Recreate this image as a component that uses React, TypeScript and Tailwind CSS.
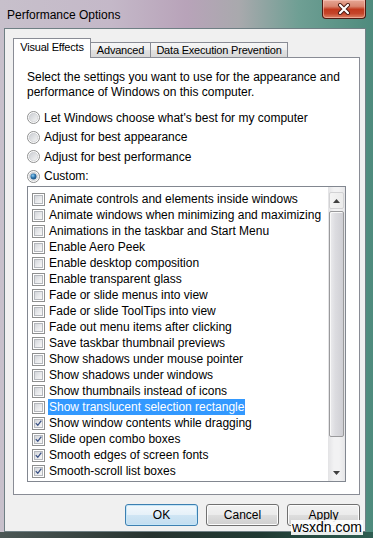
import React from "react";

type Effect = { label: string; checked: boolean; selected?: boolean };

const effects: Effect[] = [
  { label: "Animate controls and elements inside windows", checked: false },
  { label: "Animate windows when minimizing and maximizing", checked: false },
  { label: "Animations in the taskbar and Start Menu", checked: false },
  { label: "Enable Aero Peek", checked: false },
  { label: "Enable desktop composition", checked: false },
  { label: "Enable transparent glass", checked: false },
  { label: "Fade or slide menus into view", checked: false },
  { label: "Fade or slide ToolTips into view", checked: false },
  { label: "Fade out menu items after clicking", checked: false },
  { label: "Save taskbar thumbnail previews", checked: false },
  { label: "Show shadows under mouse pointer", checked: false },
  { label: "Show shadows under windows", checked: false },
  { label: "Show thumbnails instead of icons", checked: false },
  { label: "Show translucent selection rectangle", checked: false, selected: true },
  { label: "Show window contents while dragging", checked: true },
  { label: "Slide open combo boxes", checked: true },
  { label: "Smooth edges of screen fonts", checked: true },
  { label: "Smooth-scroll list boxes", checked: true },
];

const radios = [
  { label: "Let Windows choose what's best for my computer", on: false },
  { label: "Adjust for best appearance", on: false },
  { label: "Adjust for best performance", on: false },
  { label: "Custom:", on: true },
];

const tabIdle =
  "flex h-[15px] items-center justify-center whitespace-nowrap border border-b-0 border-l-0 border-[#898c95] " +
  "bg-[linear-gradient(180deg,#f6f6f6_0%,#eeeeee_50%,#e2e2e2_51%,#d8d8d8_100%)] text-[11px] tracking-[-0.2px]";

function CheckBox({ checked }: { checked: boolean }) {
  return (
    <span className="flex h-[13px] w-[13px] shrink-0 items-center justify-center border border-[#8e8f8f] bg-white p-px">
      <span className="relative h-full w-full border border-[#b5b8bd] bg-[linear-gradient(135deg,#d3d6da_0%,#e9eaec_55%,#f7f7f7_100%)]">
        {checked && (
          <svg viewBox="0 0 9 9" className="absolute inset-0 h-full w-full">
            <path
              d="M1.6 4.6 L3.6 6.8 L7.6 1.6"
              fill="none"
              stroke="#3a5184"
              strokeWidth="1.7"
              strokeLinecap="square"
            />
          </svg>
        )}
      </span>
    </span>
  );
}

function Radio({ on }: { on: boolean }) {
  return (
    <svg viewBox="0 0 13 13" className="h-[13px] w-[13px] shrink-0">
      <defs>
        <linearGradient id="rg" x1="0" y1="0" x2="1" y2="1">
          <stop offset="0" stopColor="#c9ccd1" />
          <stop offset="1" stopColor="#f6f6f6" />
        </linearGradient>
        <radialGradient id="rd" cx="0.4" cy="0.35" r="0.7">
          <stop offset="0" stopColor="#8fd0f6" />
          <stop offset="0.55" stopColor="#2a70a8" />
          <stop offset="1" stopColor="#1c4f7c" />
        </radialGradient>
      </defs>
      <circle cx="6.5" cy="6.5" r="6" fill="#fff" stroke="#8e8f8f" />
      <circle cx="6.5" cy="6.5" r="4.3" fill="url(#rg)" stroke="#c2c4c8" strokeWidth="0.6" />
      {on && <circle cx="6.5" cy="6.5" r="3" fill="url(#rd)" />}
    </svg>
  );
}

function Arrow({ up }: { up: boolean }) {
  return (
    <svg viewBox="0 0 7 4" className="h-[4px] w-[7px]">
      <path d={up ? "M0 4 L3.5 0 L7 4 Z" : "M0 0 L3.5 4 L7 0 Z"} fill="#3f3f3f" />
    </svg>
  );
}

function Button({ label, primary }: { label: string; primary?: boolean }) {
  return (
    <button
      className={
        primary
          ? "h-[22px] w-[73px] rounded-[3px] border border-[#3c7fb1] bg-[linear-gradient(180deg,#f2f8fc_0%,#e6f1f9_48%,#cfe5f4_52%,#c2ddf0_100%)] text-[12px] text-black shadow-[inset_0_0_0_1px_#c5e6f8]"
          : "h-[22px] w-[73px] rounded-[3px] border border-[#707070] bg-[linear-gradient(180deg,#f2f2f2_0%,#ebebeb_48%,#dddddd_52%,#cfcfcf_100%)] text-[12px] text-black shadow-[inset_0_0_0_1px_#fcfcfc]"
      }
    >
      {label}
    </button>
  );
}

export default function App() {
  return (
    <div className="relative flex h-[538px] w-[373px] flex-col overflow-hidden bg-[linear-gradient(90deg,#c7c0cb_0%,#c4b8c8_30%,#b8a3b9_50%,#a9a9ad_64%,#6f9f94_80%,#4e8b7d_100%)] font-['Liberation_Sans',Arial,sans-serif] text-[12px] text-black">
      {/* title bar */}
      <div className="flex h-[28px] shrink-0 items-start">
        <span className="self-center pl-[7px] pt-[2px] text-[12px] text-black">Performance Options</span>
        <div className="ml-auto mr-[7px] flex h-[19px] w-[44px] items-center justify-center rounded-b-[4px] border border-t-0 border-[#4f1a12] bg-[linear-gradient(180deg,#e6a694_0%,#d98670_35%,#c2391d_52%,#c5452a_75%,#dd8365_100%)] shadow-[inset_0_0_0_1px_rgba(255,210,200,0.5)]">
          <svg viewBox="0 0 14 12" className="h-[12px] w-[14px]">
            <path d="M3 2 L11 10 M11 2 L3 10" stroke="#4a1a12" strokeWidth="4" strokeLinecap="round" />
            <path d="M3 2 L11 10 M11 2 L3 10" stroke="#ffffff" strokeWidth="2.2" strokeLinecap="round" />
          </svg>
        </div>
      </div>

      {/* client area */}
      <div className="ml-[4px] mr-[7px] flex h-[504px] shrink-0 flex-col border border-[#6f7f84] bg-[#f0f0f0] pl-[8px] pt-[9px]">
        {/* tabs */}
        <div className="flex h-[19px] items-end">
          <div className="relative z-10 -mb-px flex h-[20px] w-[78px] items-center justify-center whitespace-nowrap border border-b-0 border-[#898c95] bg-white pb-[2px] text-[11px] tracking-[-0.2px]">
            Visual Effects
          </div>
          <div className={`${tabIdle} w-[60px]`}>Advanced</div>
          <div className={`${tabIdle} w-[137px]`}>Data Execution Prevention</div>
        </div>

        {/* tab panel */}
        <div className="flex h-[438px] w-[347px] flex-col border border-[#898c95] bg-white pl-[13px] pt-[12px]">
          <p className="leading-[15px]">
            Select the settings you want to use for the appearance and
            <br />
            performance of Windows on this computer.
          </p>

          <div className="mt-[8px] flex flex-col">
            {radios.map((r) => (
              <div key={r.label} className="flex h-[19.5px] items-center gap-[4px]">
                <Radio on={r.on} />
                <span>{r.label}</span>
              </div>
            ))}
          </div>

          {/* list box */}
          <div className="flex h-[296px] w-[319px] border border-[#828790] bg-white">
            <div className="flex flex-1 flex-col pt-[4px]">
              {effects.map((e) => (
                <div key={e.label} className="flex h-[16px] items-center pl-[4px]">
                  <CheckBox checked={e.checked} />
                  <span
                    className={
                      e.selected
                        ? "ml-[3px] flex h-full items-center bg-[#3399ff] px-px text-white"
                        : "ml-[4px]"
                    }
                  >
                    {e.label}
                  </span>
                </div>
              ))}
            </div>

            {/* scrollbar */}
            <div className="flex w-[17px] flex-col bg-[linear-gradient(90deg,#e3e3e5_0%,#f2f2f3_35%,#f2f2f3_65%,#e6e6e8_100%)]">
              <div className="mx-px mt-[5px] flex h-[17px] items-center justify-center rounded-[2px] border border-[#d2d2d4] bg-[linear-gradient(90deg,#f4f4f4,#ebebeb)]">
                <Arrow up />
              </div>
              <div className="flex-1">
                <div className="mx-px mt-[2px] h-[226px] rounded-[2px] border border-[#9a9a9c] bg-[linear-gradient(90deg,#ececee_0%,#dcdce0_40%,#cfcfd4_100%)] shadow-[inset_1px_1px_0_#f8f8f8]" />
              </div>
              <div className="flex h-[17px] items-center justify-center">
                <Arrow up={false} />
              </div>
            </div>
          </div>
        </div>

        {/* buttons */}
        <div className="mt-[9px] flex w-[347px] justify-end gap-[8px]">
          <Button label="OK" primary />
          <Button label="Cancel" />
          <Button label="Apply" />
        </div>
      </div>

      {/* bottom frame */}
      <div className="flex-1 bg-[linear-gradient(90deg,#4c5856_0%,#27332f_40%,#203a33_70%,#2f5e52_100%)]" />

      {/* watermark */}
      <span className="absolute bottom-[3px] right-[10px] bg-white/90 px-px text-[14px] leading-[15px] text-black">
        wsxdn.com
      </span>
    </div>
  );
}
